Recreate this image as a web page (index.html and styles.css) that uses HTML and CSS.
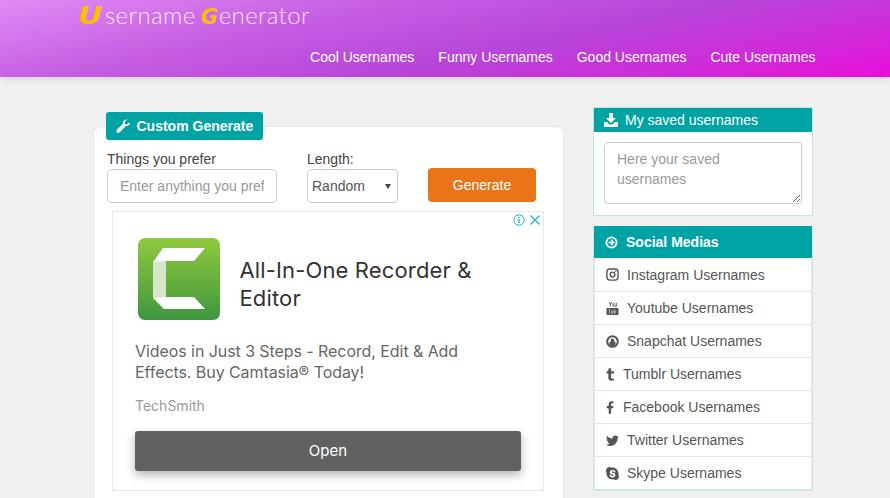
FILE: index.html
```html
<!DOCTYPE html>
<html lang="en">
<head>
<meta charset="utf-8">
<title>Username Generator</title>
<link rel="stylesheet" href="styles.css">
</head>
<body>
<div class="page">
  <header class="header">
    <div class="logo"><span class="logo-cap">U</span>sername<span class="logo-cap logo-g">G</span>enerator</div>
    <nav class="nav">
      <a>Cool Usernames</a>
      <a>Funny Usernames</a>
      <a>Good Usernames</a>
      <a>Cute Usernames</a>
    </nav>
  </header>
  <main class="main">
    <section class="card">
      <div class="tab">
        <svg class="tab-icon" viewBox="0 0 16 16"><path fill="#fff" d="M15.600 3.600c.3.900.2 2.100-.5 3.100-.9 1.200-2.400 1.700-3.800 1.300L4.300 15.200c-.9.900-2.300.9-3.200 0-.9-.9-.9-2.300 0-3.200l7.200-7c-.4-1.400.1-2.900 1.300-3.800C10.600.5 11.800.4 12.700.7L10 3.400l.4 2.400 2.400.4z"/></svg>
        <span>Custom Generate</span>
      </div>
      <form class="form">
        <div class="field field-text">
          <label>Things you prefer</label>
          <input class="control text-input" type="text" placeholder="Enter anything you prefer">
        </div>
        <div class="field field-select">
          <label>Length:</label>
          <div class="select-wrap">
            <select class="control select-input"><option>Random</option></select>
          </div>
        </div>
        <button class="generate" type="button">Generate</button>
      </form>
      <div class="ad">
        <div class="ad-badges">
          <svg class="ad-i" viewBox="0 0 12 12"><circle cx="6" cy="6" r="5.200" fill="none" stroke="#19b5d8" stroke-width="1"/><rect x="5.300" y="5" width="1.400" height="4" fill="#19b5d8"/><rect x="5.300" y="2.800" width="1.400" height="1.400" fill="#19b5d8"/></svg>
          <svg class="ad-x" viewBox="0 0 12 12"><path d="M1.500 1.500l9 9M10.500 1.500l-9 9" stroke="#19b5d8" stroke-width="1.200" fill="none"/></svg>
        </div>
        <div class="ad-top">
          <svg class="ad-logo" viewBox="0 0 82 82">
            <defs><linearGradient id="g" x1="0" y1="0" x2="0" y2="1"><stop offset="0" stop-color="#90c93e"/><stop offset="1" stop-color="#3f963e"/></linearGradient></defs>
            <rect width="82" height="82" rx="7" fill="url(#g)"/>
            <path fill="#fff" d="M25 10H67L56 23H28V59H56L67 71H26L15 60V24Z"/>
            <path fill="#d6e6c8" d="M15 24L28 23V59L15 60Z"/>
          </svg>
          <div class="ad-title">All-In-One Recorder &amp; Editor</div>
        </div>
        <p class="ad-desc">Videos in Just 3 Steps - Record, Edit &amp; Add Effects. Buy Camtasia® Today!</p>
        <div class="ad-brand">TechSmith</div>
        <div class="ad-open">Open</div>
      </div>
    </section>
    <aside class="side">
      <section class="panel">
        <h3 class="panel-head panel-head-thin">
          <svg class="head-icon head-icon-save" viewBox="0 0 14 14"><path fill="#fff" d="M5 0h4v5h3L7 10 2 5h3zM0 9h3l2.500 2.500h3L11 9h3v5H0z"/></svg>
          <span>My saved usernames</span>
        </h3>
        <div class="saved-body">
          <textarea class="saved" placeholder="Here your saved usernames"></textarea>
        </div>
      </section>
      <section class="panel panel-social">
        <h3 class="panel-head panel-head-bold">
          <svg class="head-icon" viewBox="0 0 14 14"><circle cx="7" cy="7" r="5.500" fill="none" stroke="#fff" stroke-width="2"/><path fill="#fff" d="M7 3.600L10.400 7 7 10.400 6 9.400 7.400 7.800H3.700V6.200h3.700L6 4.600z"/></svg>
          <span>Social Medias</span>
        </h3>
        <ul class="list">
          <li><svg class="li-icon" viewBox="0 0 14 14"><rect x="1" y="1" width="12" height="12" rx="3.200" fill="none" stroke="#555" stroke-width="1.500"/><circle cx="7" cy="7" r="2.600" fill="none" stroke="#555" stroke-width="1.500"/><circle cx="10.500" cy="3.500" r=".8" fill="#555"/></svg><a>Instagram Usernames</a></li>
          <li><svg class="li-icon" viewBox="0 0 14 14"><path fill="#555" d="M1.500 6.500h11a1 1 0 0 1 1 1V13a1 1 0 0 1-1 1h-11a1 1 0 0 1-1-1V7.500a1 1 0 0 1 1-1z"/><path fill="#555" d="M3 0h1l.7 1.800L5.400 0h1L5.100 3v2H4.200V3zM7 1.200h1.200v3.600H7zM9.200 1.200h.8v3h.8v-3h.8v3.800H9.200z"/><path fill="#ccc" d="M2.500 8h2.600v.7h-.9V12.500h-.8V8.700h-.9zM5.600 9.200h.7v2.600h.6V9.200h.7v3.300h-2zM8.300 8h.7v1.200h1.600v3.300H8.300zM9 9.900v1.900h.9V9.900z"/></svg><a>Youtube Usernames</a></li>
          <li><svg class="li-icon" viewBox="0 0 14 14"><circle cx="7" cy="7" r="6.800" fill="#555"/><circle cx="7" cy="7" r="4.600" fill="#fff"/><path fill="#555" d="M7 3.800c1.300 0 2 .9 2 2v1.400l1.600.9-.6 2.400-3 2.300-3-2.300-.6-2.400 1.600-.9V5.800c0-1.100.7-2 2-2z"/></svg><a>Snapchat Usernames</a></li>
          <li><svg class="li-icon li-icon-small" viewBox="0 0 10 14"><path fill="#555" d="M3 0h2.700v3.300h3.200v2.700H5.700v4.200c0 1 .5 1.400 1.400 1.400.6 0 1.200-.2 1.800-.5V13.200c-.9.500-1.800.8-2.900.8C3.900 14 2.600 12.900 2.600 11V6H.6V3.800C2.100 3.300 2.900 2 3 0z"/></svg><a>Tumblr Usernames</a></li>
          <li><svg class="li-icon li-icon-small" viewBox="0 0 10 14"><path fill="#555" d="M3 14V7.700H1V5.300h2V3.500C3 1.300 4.300 0 6.400 0c.9 0 1.600.1 1.900.1v2.200H7C6 2.300 5.700 2.800 5.700 3.600v1.700h2.500l-.3 2.400H5.700V14z"/></svg><a>Facebook Usernames</a></li>
          <li class="li-wide"><svg class="li-icon" viewBox="0 0 14 14"><path fill="#555" d="M14 2.900c-.5.200-1 .4-1.600.5.600-.4 1-.9 1.300-1.600-.5.300-1.100.6-1.800.7C11.400 1.900 10.700 1.500 9.800 1.500 8.200 1.500 6.900 2.800 6.900 4.400c0 .2 0 .4.100.7C4.600 5 2.500 3.800 1 2c-.2.400-.4.900-.4 1.400 0 1 .5 1.900 1.300 2.400-.5 0-.9-.1-1.300-.4v.1c0 1.400 1 2.600 2.300 2.800-.2.100-.5.100-.8.100-.2 0-.4 0-.5-.1.400 1.200 1.400 2 2.700 2-1 .8-2.200 1.200-3.600 1.200H0c1.300.8 2.800 1.300 4.400 1.300 5.300 0 8.200-4.400 8.200-8.200v-.4c.6-.4 1-.9 1.400-1.500z"/></svg><a>Twitter Usernames</a></li>
          <li><svg class="li-icon" viewBox="0 0 14 14"><path fill="#555" d="M13.300 8.200c.1-.4.100-.8.100-1.200C13.400 3.500 10.500.6 7 .6c-.4 0-.8 0-1.200.1C5.200.3 4.500 0 3.800 0 1.700 0 0 1.700 0 3.800c0 .7.200 1.400.6 2-.1.400-.1.800-.1 1.200 0 3.500 2.900 6.400 6.500 6.400.4 0 .8 0 1.200-.1.600.4 1.300.7 2 .7 2.100 0 3.800-1.700 3.800-3.800 0-.7-.2-1.400-.7-2z"/><path fill="#fff" d="M7.100 11.200c-2.100 0-3.300-1.100-3.300-2.100 0-.6.400-.9.900-.9 1.200 0 .9 1.500 2.400 1.500.7 0 1.200-.3 1.200-.8 0-1.200-4.200-.6-4.200-3.300 0-1.400 1.300-2.400 3-2.400 1.800 0 3 .8 3 1.800 0 .5-.4.900-.9.900-1 0-.8-1.200-2.200-1.200-.7 0-1.100.3-1.100.7 0 1.100 4.200.6 4.200 3.300 0 1.500-1.300 2.500-3 2.500z"/></svg><a>Skype Usernames</a></li>
        </ul>
      </section>
    </aside>
  </main>
</div>
</body>
</html>
```

FILE: styles.css
```css
* { box-sizing: border-box; }
html, body { margin: 0; padding: 0; }
body {
  background: #f0f0f0;
  font-family: "Liberation Sans", Arial, sans-serif;
  font-size: 14px;
  color: #444;
}
.page { height: 498px; overflow: hidden; }

.header {
  height: 77px;
  padding: 0 74.5px 0 78px;
  display: flex;
  flex-direction: column;
  justify-content: space-between;
  background: linear-gradient(168deg, #e08cf5 0%, #c65ee2 32%, #b646d9 58%, #ce2cd8 80%, #e80ed8 100%);
  box-shadow: 0 2px 6px rgba(0, 0, 0, .12);
}
.logo {
  height: 30px;
  padding-top: 1px;
  font-family: Lato, sans-serif;
  font-weight: 300;
  font-size: 24px;
  line-height: 27px;
  letter-spacing: .4px;
  color: rgba(255, 255, 255, .85);
  white-space: nowrap;
}
.logo-cap {
  display: inline-block;
  width: 27px;
  font-family: "DejaVu Sans", sans-serif;
  font-weight: 700;
  font-style: italic;
  font-size: 25px;
  line-height: 24px;
  letter-spacing: 0;
  color: #fbbd08;
  transform: scaleX(1.2);
  transform-origin: left center;
}
.logo-g { width: 18px; margin-left: 5px; font-size: 21px; transform: none; }
.nav {
  display: flex;
  justify-content: flex-end;
  gap: 24px;
  height: 40px;
  line-height: 40px;
  color: #fff;
}

.main {
  display: flex;
  align-items: flex-start;
  padding: 30px 0 0 93px;
  gap: 29px;
}
.card {
  width: 471px;
  margin-top: 19px;
  height: 420px;
  padding: 0 13px;
  background: #fff;
  border: 1px solid #e8e8e8;
  border-radius: 8px;
}
.tab {
  display: flex;
  width: fit-content;
  align-items: center;
  gap: 6.5px;
  height: 28px;
  margin: -15px 0 0 -1px;
  padding: 0 9.5px 0 10px;
  background: #00a3a3;
  border-radius: 3px;
  color: #fff;
  font-weight: 700;
  font-size: 14px;
}
.tab-icon { width: 14px; height: 14px; }
.form {
  display: flex;
  align-items: flex-start;
  margin-top: 9px;
  line-height: 20px;
}
.field label { display: block; color: #444; }
.field-text { width: 170px; }
.field-select { width: 91px; margin-left: 30px; }
.control {
  display: block;
  height: 34px;
  width: 100%;
  background: #fff;
  border: 1px solid #ccc;
  border-radius: 4px;
  font-family: inherit;
  font-size: 14px;
  color: #555;
}
.text-input { padding: 0 12px; }
.text-input::placeholder { color: #999; opacity: 1; }
.select-wrap { position: relative; }
.select-wrap::after {
  content: "";
  position: absolute;
  top: 15px;
  right: 7px;
  border-style: solid;
  border-width: 5px 3px 0;
  border-color: #444 transparent transparent;
  pointer-events: none;
}
.select-input { appearance: none; padding: 0 0 0 4px; }
.generate {
  width: 108px;
  height: 34px;
  margin: 19px 0 0 30px;
  background: #ea7518;
  border: 0;
  border-radius: 4px;
  color: #fff;
  font-family: inherit;
  font-size: 14px;
}

.ad {
  position: relative;
  width: 432px;
  height: 280px;
  margin: 8px 0 0 5px;
  padding: 26px 22px 0;
  border: 1px solid #e8e8e8;
  font-family: Inter, Roboto, sans-serif;
}
.ad-badges {
  position: absolute;
  top: 2px;
  right: 2px;
  display: flex;
  align-items: center;
  gap: 4px;
}
.ad-i, .ad-x { width: 12px; height: 12px; display: block; }
.ad-top { display: flex; align-items: center; gap: 19.5px; padding-left: 3px; }
.ad-logo { width: 82px; height: 82px; flex: none; }
.ad-title { width: 260px; padding-top: 10px; font-size: 22px; line-height: 28px; letter-spacing: .14px; color: #333; }
.ad-desc {
  margin: 21px 0 0;
  padding-right: 40px;
  font-size: 16px;
  line-height: 21px;
  letter-spacing: -.07px;
  color: #666;
}
.ad-brand { margin-top: 13px; font-size: 14px; line-height: 20px; color: #999; }
.ad-open {
  height: 40px;
  margin-top: 15px;
  background: #616161;
  border-radius: 3px;
  box-shadow: 0 4px 10px rgba(0, 0, 0, .3);
  color: #fff;
  font-size: 15px;
  line-height: 40px;
  text-align: center;
}

.side { width: 220px; display: flex; flex-direction: column; gap: 10px; }
.panel { background: #fff; border: 1px solid #bde8e8; }
.panel-head {
  margin: 0;
  display: flex;
  align-items: center;
  background: #00a3a3;
  color: #fff;
  font-size: 14px;
  padding-left: 11px;
}
.panel-head-thin { height: 24px; font-weight: 400; gap: 7px; padding-left: 10px; }
.panel-head-bold { height: 32px; font-weight: 700; gap: 8px; }
.head-icon { width: 13px; height: 13px; }
.head-icon-save { width: 14px; height: 14px; }
.saved-body { padding: 10px; height: 83px; }
.saved {
  display: block;
  width: 198px;
  height: 62px;
  padding: 6px 12px;
  border: 1px solid #ccc;
  border-radius: 4px;
  font-family: inherit;
  font-size: 14px;
  line-height: 20px;
}
.saved::placeholder { color: #999; opacity: 1; }
.panel-social { border-color: #cfe6e6; border-width: 0 1px 2px; border-radius: 0 0 3px 3px; }
.list { list-style: none; margin: 0; padding: 0; border-left: 1px solid #e6e6e0; border-right: 1px solid #e6e6e0; }
.list li {
  display: flex;
  align-items: center;
  gap: 8px;
  height: 33px;
  padding-left: 11px;
  border-top: 1px solid #e8e6e0;
  color: #555;
}
.list li:first-child { border-top: 0; }
.li-icon { width: 13px; height: 13px; flex: none; }
.li-icon-small { width: 9px; }
.li-wide { gap: 9px; }
```
